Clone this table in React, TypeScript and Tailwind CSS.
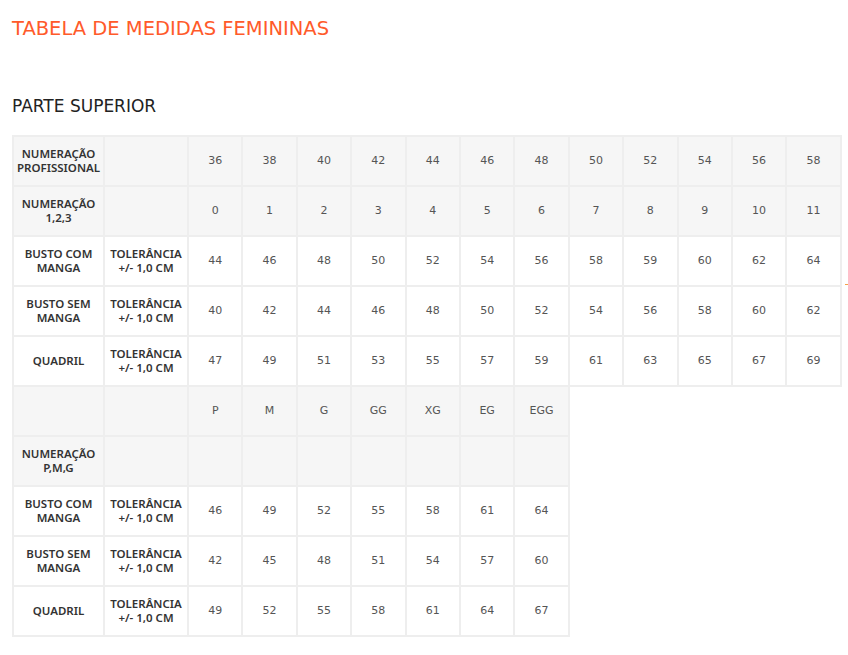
const cols1 = ["36", "38", "40", "42", "44", "46", "48", "50", "52", "54", "56", "58"];
const cols2 = ["P", "M", "G", "GG", "XG", "EG", "EGG"];

type Row = { label: string[]; tol?: boolean; values: string[]; shaded?: boolean };

const top: Row[] = [
  { label: ["NUMERAÇÃO", "PROFISSIONAL"], values: cols1, shaded: true },
  { label: ["NUMERAÇÃO", "1,2,3"], values: ["0", "1", "2", "3", "4", "5", "6", "7", "8", "9", "10", "11"], shaded: true },
  { label: ["BUSTO COM", "MANGA"], tol: true, values: ["44", "46", "48", "50", "52", "54", "56", "58", "59", "60", "62", "64"] },
  { label: ["BUSTO SEM", "MANGA"], tol: true, values: ["40", "42", "44", "46", "48", "50", "52", "54", "56", "58", "60", "62"] },
  { label: ["QUADRIL"], tol: true, values: ["47", "49", "51", "53", "55", "57", "59", "61", "63", "65", "67", "69"] },
];

const bottom: Row[] = [
  { label: [], values: cols2, shaded: true },
  { label: ["NUMERAÇÃO", "P,M,G"], values: ["", "", "", "", "", "", ""], shaded: true },
  { label: ["BUSTO COM", "MANGA"], tol: true, values: ["46", "49", "52", "55", "58", "61", "64"] },
  { label: ["BUSTO SEM", "MANGA"], tol: true, values: ["42", "45", "48", "51", "54", "57", "60"] },
  { label: ["QUADRIL"], tol: true, values: ["49", "52", "55", "58", "61", "64", "67"] },
];

function SizeTable({ rows, count, width }: { rows: Row[]; count: number; width: string }) {
  return (
    <table className={`table-fixed border-collapse ${width}`}>
      <colgroup>
        <col className="w-[91px]" />
        <col className="w-[84px]" />
        {Array.from({ length: count }).map((_, i) => (
          <col key={i} className="w-[54.4px]" />
        ))}
      </colgroup>
      <tbody>
        {rows.map((r, i) => (
          <tr key={i} className={r.shaded ? "h-[50px] bg-[#f6f6f6]" : "h-[50px] bg-white"}>
            <td className="border-2 border-[#eeeeee] px-0 text-center font-['Noto_Sans',sans-serif] text-[11.5px] leading-[14px] font-semibold text-[#333]">
              {r.label.map((l, j) => (
                <div key={j}>{l}</div>
              ))}
            </td>
            <td className="border-2 border-[#eeeeee] px-0 text-center font-['Noto_Sans',sans-serif] text-[11.5px] leading-[14px] font-semibold text-[#333]">
              {r.tol && (
                <>
                  <div>TOLERÂNCIA</div>
                  <div>+/- 1,0 CM</div>
                </>
              )}
            </td>
            {r.values.map((v, j) => (
              <td key={j} className="border-2 border-[#eeeeee] text-center text-[11px] text-[#555]">
                {v}
              </td>
            ))}
          </tr>
        ))}
      </tbody>
    </table>
  );
}

export default function App() {
  return (
    <div className="relative min-h-screen bg-white px-[12px] font-['DejaVu_Sans',sans-serif]">
      <h1 className="pt-[17px] text-[19.5px] leading-[24px] text-[#ff5a2a]">TABELA DE MEDIDAS FEMININAS</h1>
      <h2 className="mt-[55px] text-[17px] leading-[20px] text-[#222]">PARTE SUPERIOR</h2>
      <div className="mt-[19px]">
        <SizeTable rows={top} count={12} width="w-[828px]" />
        <div className="-mt-[2px]">
          <SizeTable rows={bottom} count={7} width="w-[555.8px]" />
        </div>
      </div>
      <span className="absolute left-[845px] top-[284px] h-px w-[3px] bg-[#f5a04a]" />
    </div>
  );
}
